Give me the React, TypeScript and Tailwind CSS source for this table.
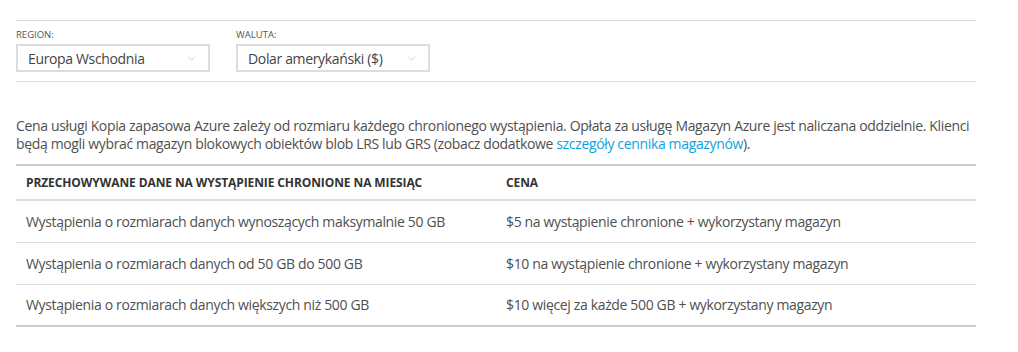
import { ChevronDown } from "lucide-react"

type Row = { size: string; price: string }

const rows: Row[] = [
  { size: "Wystąpienia o rozmiarach danych wynoszących maksymalnie 50 GB", price: "$5 na wystąpienie chronione + wykorzystany magazyn" },
  { size: "Wystąpienia o rozmiarach danych od 50 GB do 500 GB", price: "$10 na wystąpienie chronione + wykorzystany magazyn" },
  { size: "Wystąpienia o rozmiarach danych większych niż 500 GB", price: "$10 więcej za każde 500 GB + wykorzystany magazyn" },
]

function Select({ label, value }: { label: string; value: string }) {
  return (
    <div className="flex flex-col">
      <span className="text-[9.5px] leading-[10px] uppercase text-[#555] mb-1">{label}</span>
      <div className="w-[194px] h-[28px] border-2 border-[#dcdcdc] flex items-center justify-between pl-[10px] pr-[10px]">
        <span className="text-[14px] tracking-[-0.35px] text-[#444]">{value}</span>
        <ChevronDown className="w-[13px] h-[13px] text-[#c8c8c8]" strokeWidth={1.5} />
      </div>
    </div>
  )
}

export default function App() {
  return (
    <div className="w-[1018px] h-[352px] bg-white px-4 pt-5 font-['Open_Sans',sans-serif]">
      <div className="w-[960px]">
        {/* Filters */}
        <div className="border-t border-b border-[#dcdcdc] pt-[9px] pb-[9px] flex gap-[26px]">
          <Select label="Region:" value="Europa Wschodnia" />
          <Select label="Waluta:" value="Dolar amerykański ($)" />
        </div>

        <p className="mt-[35px] text-[14px] leading-[18px] tracking-[-0.35px] text-[#505050]">
          Cena usługi Kopia zapasowa Azure zależy od rozmiaru każdego chronionego wystąpienia. Opłata za usługę Magazyn Azure jest naliczana oddzielnie. Klienci będą mogli wybrać magazyn blokowych obiektów blob LRS lub GRS (zobacz dodatkowe{" "}
          <a className="text-[#0ca3e0]">szczegóły cennika magazynów</a>).
        </p>

        {/* Pricing table */}
        <table className="mt-[11px] w-full border-collapse text-left">
          <thead>
            <tr className="border-t-2 border-b-2 border-t-[#cccccc] border-b-[#dddddd]">
              <th className="w-1/2 h-[35px] pl-[10px] text-[12px] tracking-[-0.1px] font-bold uppercase text-[#333]">Przechowywane dane na wystąpienie chronione na miesiąc</th>
              <th className="w-1/2 h-[35px] pl-[10px] text-[12px] tracking-[-0.1px] font-bold uppercase text-[#333]">Cena</th>
            </tr>
          </thead>
          <tbody>
            {rows.map((r, i) => (
              <tr key={i} className={i === rows.length - 1 ? "border-b-2 border-[#cccccc]" : "border-b border-[#dddddd]"}>
                <td className="h-[42px] pl-[10px] text-[14px] tracking-[-0.35px] text-[#505050]">{r.size}</td>
                <td className="h-[42px] pl-[10px] text-[14px] tracking-[-0.35px] text-[#505050]">{r.price}</td>
              </tr>
            ))}
          </tbody>
        </table>
      </div>
    </div>
  )
}
